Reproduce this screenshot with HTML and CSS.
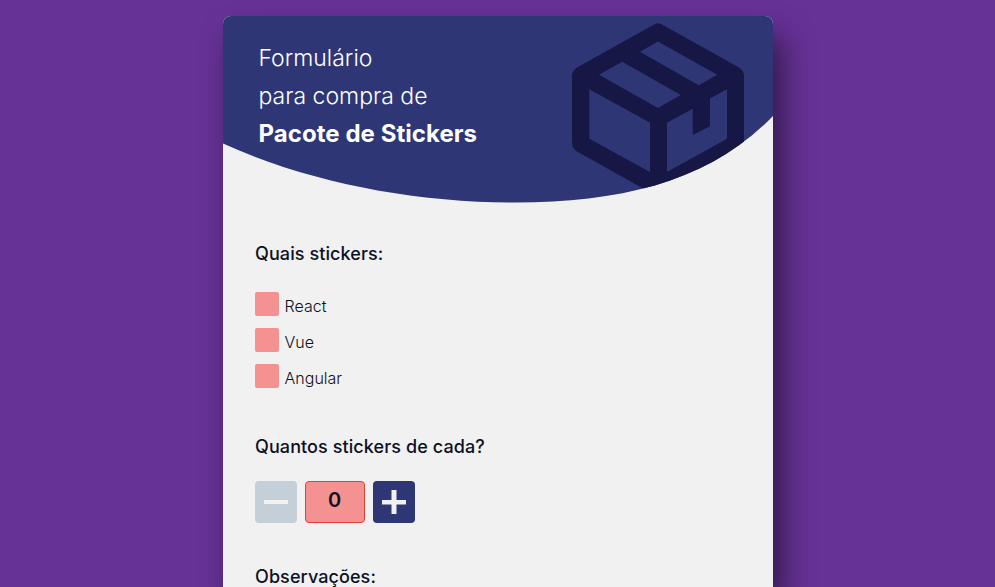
FILE: index.html
```html
<!DOCTYPE html>
<html lang="pt-BR">
<head>
<meta charset="utf-8">
<title>Formulário para compra de Pacote de Stickers</title>
<link rel="stylesheet" href="styles.css">
</head>
<body>
<main class="card">
  <header class="header">
    <svg class="header-art" viewBox="0 0 550 187" aria-hidden="true">
      <clipPath id="wave"><path d="M0 0H550V100C487 165 400 186.500 292 186.500C192 186.500 87 167 0 127.500Z"/></clipPath>
      <g clip-path="url(#wave)">
        <rect width="550" height="187" fill="#2e3675"/>
        <path fill="#171745" fill-rule="evenodd" d="M431.500 8.200Q435 6.200 438.500 8.200L516 51.500Q521 54.500 521 60V127Q521 132.500 516 135.500L440 178Q435 180.500 430 178L354 135.500Q349 132.500 349 127V60Q349 54.500 354 51.500Z
          M435 25.500L417 35.700L475.700 69.300L494.300 58.700Z
          M399.300 45.700L376 58.700L435 92L457.700 79Z
          M366.300 73.300V122.700L427 156V106.700Z
          M504 73.300L487 82.500V110.300L469.700 119V92.700L444 106.700V156L504 122.700Z"/>
      </g>
    </svg>
    <h1 class="title">Formulário<br>para compra de<br><strong>Pacote de Stickers</strong></h1>
  </header>
  <form class="form">
    <h2 class="label">Quais stickers:</h2>
    <div class="options">
      <label class="option"><span class="box"></span><span class="name">React</span></label>
      <label class="option"><span class="box"></span><span class="name">Vue</span></label>
      <label class="option"><span class="box"></span><span class="name">Angular</span></label>
    </div>
    <h2 class="label">Quantos stickers de cada?</h2>
    <div class="counter">
      <button type="button" class="step step-off" aria-label="Diminuir"><svg width="24" height="24"><path d="M0 10H24V14H0Z"/></svg></button>
      <output class="count">0</output>
      <button type="button" class="step" aria-label="Aumentar"><svg width="24" height="24"><path d="M0 10H9.500V0H14.500V10H24V14.500H14.500V24H9.500V14.500H0Z"/></svg></button>
    </div>
    <h2 class="label">Observações:</h2>
  </form>
</main>
</body>
</html>
```
FILE: styles.css
```css
* { box-sizing: border-box; }
html { height: 100%; overflow: hidden; }
body {
  margin: 0;
  height: 100%;
  overflow: hidden;
  background: #663296;
  font-family: Inter, "Liberation Sans", sans-serif;
  color: #0d1023;
}
.card {
  width: 550px;
  height: 571px;
  margin: 16px 0 0 223px;
  background: #f1f1f1;
  border-radius: 8px 8px 0 0;
  box-shadow: 10px 20px 30px rgba(0, 0, 0, .5);
}
.header {
  position: relative;
  height: 187px;
  padding: 23px 36px 0 35.5px;
  border-radius: 8px 8px 0 0;
  overflow: hidden;
}
.header-art {
  position: absolute;
  inset: 0;
  width: 550px;
  height: 187px;
}
.title {
  position: relative;
  margin: 0;
  color: #fff;
  font-size: 23px;
  font-weight: 300;
  line-height: 38px;
}
.title strong {
  font-size: 24px;
  font-weight: 700;
  letter-spacing: .05px;
}
.form { padding: 36px 32px 0; }
.label {
  margin: 0;
  font-size: 18px;
  font-weight: 500;
  line-height: 30px;
  letter-spacing: .09px;
}
.options {
  display: flex;
  flex-direction: column;
  gap: 12px;
  margin: 23px 0 44px;
}
.option {
  display: flex;
  gap: 5.6px;
  height: 24px;
}
.box {
  width: 24px;
  height: 24px;
  border-radius: 2px;
  background: #f49292;
}
.name {
  padding-top: 2px;
  font-size: 16px;
  font-weight: 300;
  line-height: 24px;
}
.counter {
  display: flex;
  gap: 8px;
  margin: 19px 0 39px;
}
.step, .count {
  display: flex;
  align-items: center;
  justify-content: center;
  height: 42px;
  border-radius: 4px;
}
.step {
  width: 42px;
  padding: 0;
  border: 0;
  background: #2e3675;
}
.step-off { background: #c5cfd8; }
.step svg { fill: #f1f1f1; }
.count {
  width: 60px;
  padding: 0 1px 4px 0;
  border: 1px solid #e83f33;
  background: #f49292;
  font-size: 20px;
  font-weight: 600;
}
```
